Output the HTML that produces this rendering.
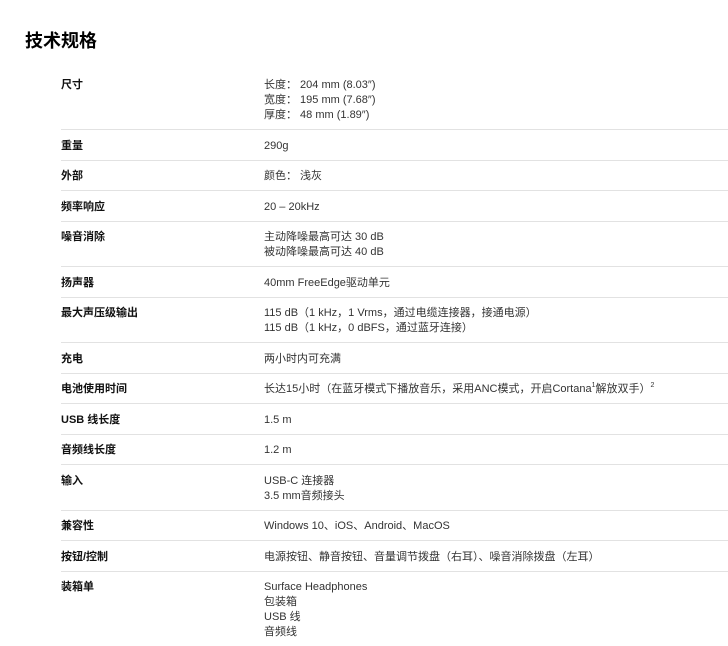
<!DOCTYPE html>
<html><head><meta charset="utf-8"><style>
body{margin:0;background:#fff;width:728px;height:628px;overflow:hidden;font-family:"Liberation Sans","Noto Sans CJK SC",sans-serif;color:#222}
h1{position:absolute;left:25px;top:29px;margin:0;font-size:18px;font-weight:bold;line-height:24px;color:#000}
table{position:absolute;left:61px;top:69.5px;width:667px;border-collapse:collapse;font-size:11px;line-height:15px}
td{padding:8.5px 0 6px 0;border-bottom:1px solid #e2e2e2;vertical-align:top}
td.l{width:203px;font-weight:bold;color:#111}
td.v{color:#333}
tr:last-child td{border-bottom:none}
sup{font-size:7px;line-height:0;vertical-align:5px}
</style></head><body>
<h1>技术规格</h1>
<table>
<tr><td class="l">尺寸</td><td class="v">长度： 204 mm (8.03″)<br>宽度： 195 mm (7.68″)<br>厚度： 48 mm (1.89″)</td></tr>
<tr><td class="l">重量</td><td class="v">290g</td></tr>
<tr><td class="l">外部</td><td class="v">颜色： 浅灰</td></tr>
<tr><td class="l">频率响应</td><td class="v">20 – 20kHz</td></tr>
<tr><td class="l">噪音消除</td><td class="v">主动降噪最高可达 30 dB<br>被动降噪最高可达 40 dB</td></tr>
<tr><td class="l">扬声器</td><td class="v">40mm FreeEdge驱动单元</td></tr>
<tr><td class="l">最大声压级输出</td><td class="v">115 dB（1 kHz，1 Vrms，通过电缆连接器，接通电源）<br>115 dB（1 kHz，0 dBFS，通过蓝牙连接）</td></tr>
<tr><td class="l">充电</td><td class="v">两小时内可充满</td></tr>
<tr><td class="l">电池使用时间</td><td class="v">长达15小时（在蓝牙模式下播放音乐，采用ANC模式，开启Cortana<sup>1</sup>解放双手）<sup>2</sup></td></tr>
<tr><td class="l">USB 线长度</td><td class="v">1.5 m</td></tr>
<tr><td class="l">音频线长度</td><td class="v">1.2 m</td></tr>
<tr><td class="l">输入</td><td class="v">USB-C 连接器<br>3.5 mm音频接头</td></tr>
<tr><td class="l">兼容性</td><td class="v">Windows 10、iOS、Android、MacOS</td></tr>
<tr><td class="l">按钮/控制</td><td class="v">电源按钮、静音按钮、音量调节拨盘（右耳）、噪音消除拨盘（左耳）</td></tr>
<tr><td class="l">装箱单</td><td class="v">Surface Headphones<br>包装箱<br>USB 线<br>音频线</td></tr>
</table>
</body></html>
